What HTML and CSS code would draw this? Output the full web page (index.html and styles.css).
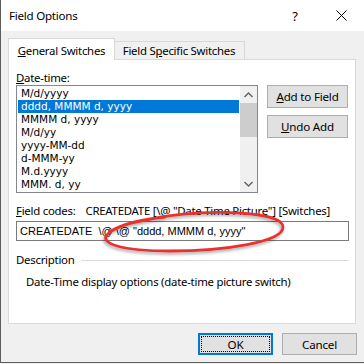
FILE: index.html
```html
<!DOCTYPE html>
<html lang="en">
<head>
    <meta charset="UTF-8">
    <title>Field Options</title>
    <link rel="stylesheet" href="styles.css">
</head>
<body>
    <div class="window">
        <!-- Title bar -->
        <div class="titlebar">
            <span class="title">Field Options</span>
            <span class="caption-btn help">?</span>
            <span class="caption-btn close">
                <svg width="11" height="11" viewBox="0 0 11 11"><path d="M0.5 0.5 L10.5 10.5 M10.5 0.5 L0.5 10.5" stroke="#000" stroke-width="1" fill="none"/></svg>
            </span>
        </div>

        <div class="dialog-body">
            <div class="tabs">
                <div class="tab active"><u>G</u>eneral Switches</div>
                <div class="tab">Field S<u>p</u>ecific Switches</div>
            </div>

            <div class="panel">
                <div class="label"><u>D</u>ate-time:</div>
                <div class="list-row">
                    <div class="listbox">
                        <ul class="items">
                            <li>M/d/yyyy</li>
                            <li class="selected">dddd, MMMM d, yyyy</li>
                            <li>MMMM d, yyyy</li>
                            <li>M/d/yy</li>
                            <li>yyyy-MM-dd</li>
                            <li>d-MMM-yy</li>
                            <li>M.d.yyyy</li>
                            <li>MMM. d, yy</li>
                        </ul>
                        <div class="scrollbar">
                            <div class="arrow">
                                <svg width="9" height="6" viewBox="0 0 9 6"><path d="M0.5 5 L4.5 1 L8.5 5" stroke="#606060" stroke-width="1.4" fill="none"/></svg>
                            </div>
                            <div class="thumb"></div>
                            <div class="track"></div>
                            <div class="arrow">
                                <svg width="9" height="6" viewBox="0 0 9 6"><path d="M0.5 1 L4.5 5 L8.5 1" stroke="#606060" stroke-width="1.4" fill="none"/></svg>
                            </div>
                        </div>
                    </div>
                    <div class="side-buttons">
                        <button class="button"><u>A</u>dd to Field</button>
                        <button class="button"><u>U</u>ndo Add</button>
                    </div>
                </div>

                <div class="codes-row">
                    <span class="codes-label"><u>F</u>ield codes:</span>
                    <span>CREATEDATE [\@ "Date Time Picture"] [Switches]</span>
                </div>
                <div class="textbox">CREATEDATE&nbsp; \@ \@ "dddd, MMMM d, yyyy"</div>

                <div class="group-title">
                    <span>Description</span>
                    <span class="rule"></span>
                </div>
                <div class="desc">Date-Time display options (date-time picture switch)</div>
            </div>

            <div class="footer">
                <button class="button ok"><span class="focus">OK</span></button>
                <button class="button">Cancel</button>
            </div>
        </div>

        <!-- Hand drawn red circle over the field code -->
        <svg class="markup" width="364" height="364" viewBox="0 0 364 364">
            <defs>
                <filter id="shadow" x="-10%" y="-50%" width="120%" height="200%">
                    <feDropShadow dx="-1" dy="2" stdDeviation="1.5" flood-color="#000" flood-opacity="0.35"/>
                </filter>
            </defs>
            <path d="M150 219 C 205 208, 283 211, 283 227 C 283 242, 225 251, 170 251 C 120 251, 100 243, 107 235 C 114 226, 140 220, 165 217" stroke="#e8322f" stroke-width="2.8" fill="none" stroke-linecap="round" filter="url(#shadow)"/>
        </svg>
    </div>
</body>
</html>
```

FILE: styles.css
```css
/* Basic styles for the dialog */
body {
    margin: 0;
    width: 364px;
    height: 364px;
    overflow: hidden;
    background-color: #f0f0f0;
    font-family: "Noto Sans", Arial, sans-serif;
    font-size: 11.4px;
    letter-spacing: -0.25px;
    color: #000000;
}

.window {
    position: relative;
    height: 363px;
    box-sizing: border-box;
    border-left: 1px solid #5c5c5c;
    border-bottom: 1px solid #5c5c5c;
    background-color: #f0f0f0;
}

.titlebar {
    height: 31px;
    display: flex;
    align-items: center;
    background-color: #ffffff;
    padding-left: 8px;
}

.title {
    flex: 1;
    font-size: 11.6px;
}

.caption-btn {
    width: 46px;
    height: 31px;
    display: flex;
    align-items: center;
    justify-content: center;
}

.help {
    font-size: 13px;
}

.dialog-body {
    padding: 7px 8px 0 7px;
}

/* Tabs */
.tabs {
    display: flex;
    align-items: flex-end;
    height: 21px;
}

.tab {
    box-sizing: border-box;
    text-align: center;
    line-height: 16px;
    white-space: nowrap;
    border: 1px solid #d9d9d9;
    border-bottom: none;
}

.tab.active {
    position: relative;
    z-index: 2;
    width: 107px;
    height: 22px;
    margin-bottom: -1px;
    padding-top: 4px;
    background-color: #ffffff;
}

.tab:not(.active) {
    width: 131px;
    height: 18px;
    margin-left: -1px;
    padding-top: 1px;
    border-left: none;
}

.panel {
    box-sizing: border-box;
    height: 265px;
    padding: 10px 6px 0 7px;
    background-color: #ffffff;
    border: 1px solid #d9d9d9;
}

.label {
    line-height: 15px;
}

/* List box */
.list-row {
    display: flex;
    gap: 9px;
}

.listbox {
    box-sizing: border-box;
    width: 242px;
    height: 108px;
    display: flex;
    border: 1px solid #828790;
}

.items {
    flex: 1;
    list-style: none;
    margin: 0;
    padding: 1px;
    font-family: "DejaVu Sans", Verdana, sans-serif;
    font-size: 10.5px;
    letter-spacing: 0;
}

.items li {
    height: 13px;
    line-height: 13px;
    padding-left: 3px;
    white-space: nowrap;
}

.items li.selected {
    background-color: #0078d7;
    color: #ffffff;
}

.scrollbar {
    width: 17px;
    display: flex;
    flex-direction: column;
    background-color: #f0f0f0;
}

.arrow {
    height: 17px;
    display: flex;
    align-items: center;
    justify-content: center;
}

.thumb {
    height: 34px;
    background-color: #cdcdcd;
}

.track {
    flex: 1;
}

.side-buttons {
    display: flex;
    flex-direction: column;
    gap: 7px;
}

.button {
    box-sizing: border-box;
    width: 81px;
    height: 23px;
    padding: 0;
    font-family: "Noto Sans", Arial, sans-serif;
    font-size: 11.6px;
    letter-spacing: -0.2px;
    color: #000000;
    background-color: #e1e1e1;
    border: 1px solid #adadad;
}

/* Field codes */
.codes-row {
    margin-top: 10px;
    line-height: 16px;
    display: flex;
    white-space: nowrap;
}

.codes-label {
    margin-right: 10px;
}

.textbox {
    box-sizing: border-box;
    height: 20px;
    margin-top: 2px;
    padding-left: 3px;
    line-height: 18px;
    font-family: "Liberation Sans", Arial, sans-serif;
    font-size: 11px;
    letter-spacing: 0;
    border: 1px solid #7a7a7a;
    white-space: nowrap;
}

.group-title {
    display: flex;
    align-items: center;
    margin-top: 11px;
    line-height: 16px;
}

.rule {
    flex: 1;
    height: 1px;
    margin-left: 6px;
    background-color: #dcdcdc;
}

.desc {
    margin-top: 6px;
    padding-left: 10px;
    line-height: 16px;
}

/* Footer buttons */
.footer {
    display: flex;
    justify-content: flex-end;
    gap: 9px;
    padding-top: 9px;
    margin-right: -1px;
}

.footer .button {
    width: 75px;
    height: 22px;
}

.button.ok {
    border: 2px solid #0078d7;
    padding: 1px;
}

.focus {
    display: flex;
    align-items: center;
    justify-content: center;
    height: 100%;
    border: 1px dotted #000000;
    box-sizing: border-box;
}

.markup {
    position: absolute;
    top: 0;
    left: -1px;
    pointer-events: none;
}
```
